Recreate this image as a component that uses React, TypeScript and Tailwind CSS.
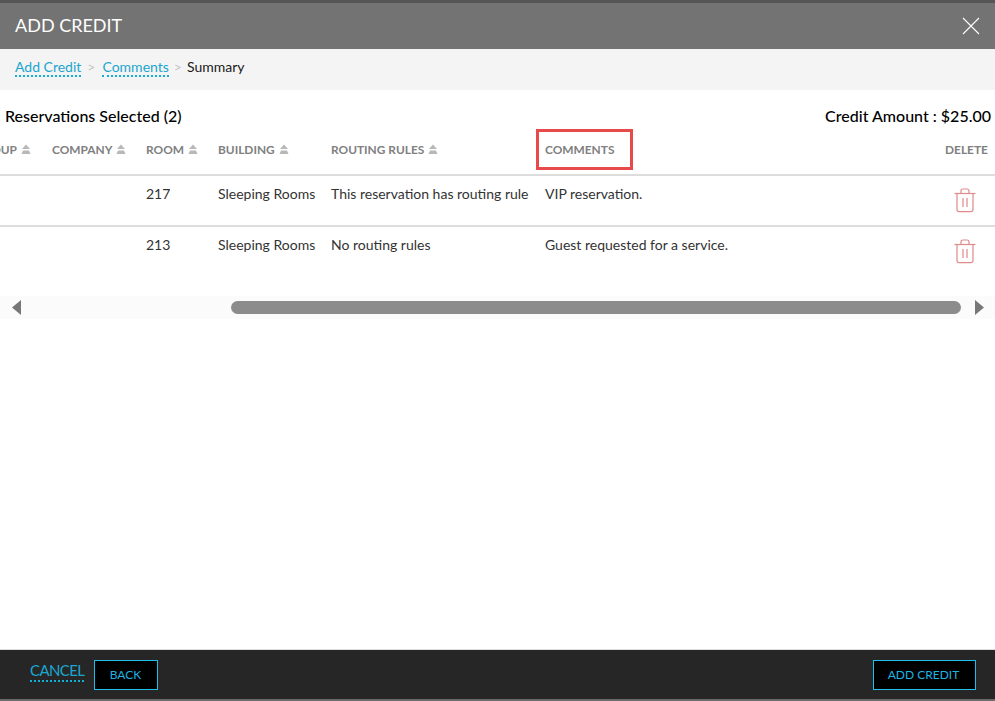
const rows = [
  { room: "217", building: "Sleeping Rooms", routing: "This reservation has routing rule", comment: "VIP reservation." },
  { room: "213", building: "Sleeping Rooms", routing: "No routing rules", comment: "Guest requested for a service." },
];

const SortIcon = () => (
  <svg width="10" height="11" viewBox="0 0 10 11" className="ml-[4px] shrink-0">
    <path d="M5 0.5 L9 5 H1 Z" fill="#b8b8b8" />
    <path d="M2 6.5 H8 L9.5 10 H0.5 Z" fill="#b8b8b8" />
  </svg>
);

const TrashIcon = () => (
  <svg width="22" height="25" viewBox="0 0 22 25" fill="none" stroke="#e08a8a" strokeWidth="1.2">
    <path d="M0.5 5.5 H21.5" />
    <path d="M7 5.5 V3 Q7 1 9 1 H13 Q15 1 15 3 V5.5" />
    <path d="M3 5.5 V21.5 Q3 23.7 5.2 23.7 H16.8 Q19 23.7 19 21.5 V5.5" />
    <path d="M9 10 V19 M13 10 V19" />
  </svg>
);

const Header = ({ label, width }: { label: string; width: string }) => (
  <div className={`${width} shrink-0 flex items-center`}>
    <span>{label}</span>
    <SortIcon />
  </div>
);

export default function App() {
  return (
    <div className="w-[995px] h-[701px] flex flex-col overflow-hidden bg-white font-['Lato',sans-serif]">
      <div className="h-[49px] shrink-0 bg-[#737373] border-t-[3px] border-[#555555] flex items-center justify-between pl-[15px] pr-[15px]">
        <h1 className="text-[18px] text-white mb-[1px]">ADD CREDIT</h1>
        <svg width="18" height="18" viewBox="0 0 18 18" stroke="white" strokeWidth="1.1">
          <path d="M1 1 L17 17 M17 1 L1 17" />
        </svg>
      </div>

      <div className="h-[41px] shrink-0 bg-[#f4f4f4] flex items-center pl-[15px] pb-[4px] text-[14px]">
        <a className="text-[#1aa6cf] border-b-2 border-dotted border-[#12b0d6] leading-[17px]">Add Credit</a>
        <span className="text-[#c4c4c4] ml-[6px] mr-[7px] text-[14px] leading-[17px] mb-[2px]">&gt;</span>
        <a className="text-[#1aa6cf] border-b-2 border-dotted border-[#12b0d6] leading-[17px]">Comments</a>
        <span className="text-[#c4c4c4] ml-[5px] mr-[5px] text-[14px] leading-[17px] mb-[2px]">&gt;</span>
        <span className="text-[#1a1a1a] leading-[17px] mb-[2px]">Summary</span>
      </div>

      <div className="flex-1 min-h-0 flex flex-col">
        <div className="flex justify-between pl-[5px] pr-[4px] pt-[16px] text-[16px] font-medium text-black leading-[20px]">
          <span>Reservations Selected (2)</span>
          <span>Credit Amount : $25.00</span>
        </div>

        <div className="h-[47px] mt-[3px] pb-[3px] flex items-center -ml-[25px] w-[1020px] text-[11.9px] font-bold text-[#808080] border-b-2 border-[#dddddd]">
          <Header label="GROUP" width="w-[77px]" />
          <Header label="COMPANY" width="w-[94px]" />
          <Header label="ROOM" width="w-[72px]" />
          <Header label="BUILDING" width="w-[113px]" />
          <Header label="ROUTING RULES" width="w-[214px]" />
          <div className="flex-1 relative">
            COMMENTS
            <div className="absolute -left-[9px] -top-[12px] w-[97px] h-[41px] border-[3px] border-[#e8494a]" />
          </div>
          <div className="w-[50px] shrink-0">DELETE</div>
        </div>

        {rows.map((row, i) => (
          <div
            key={row.room}
            className={`h-[51px] flex -ml-[25px] w-[1020px] text-[14px] text-[#333333] pt-[8px] leading-[20px] ${
              i === 0 ? "border-b-2 border-[#dddddd]" : ""
            }`}
          >
            <div className="w-[171px] shrink-0" />
            <div className="w-[72px] shrink-0">{row.room}</div>
            <div className="w-[113px] shrink-0">{row.building}</div>
            <div className="w-[214px] shrink-0">{row.routing}</div>
            <div className="flex-1">{row.comment}</div>
            <div className="w-[41px] shrink-0 pt-[4px]">
              <TrashIcon />
            </div>
          </div>
        ))}

        <div className="h-[23px] mt-[18px] shrink-0 bg-[#fbfbfb] flex items-center pl-[12px] pr-[11px]">
          <svg width="9" height="15" viewBox="0 0 9 15" className="shrink-0">
            <path d="M9 0 V15 L0 7.5 Z" fill="#777777" />
          </svg>
          <div className="ml-[210px] w-[730px] h-[13px] rounded-full bg-[#8c8c8c] shrink-0" />
          <svg width="9" height="15" viewBox="0 0 9 15" className="ml-[14px] shrink-0">
            <path d="M0 0 V15 L9 7.5 Z" fill="#777777" />
          </svg>
        </div>
      </div>

      <div className="h-[52px] shrink-0 bg-[#262626] border-t border-[#dddddd] border-b-2 border-b-[#6a6a6a] flex items-center pl-[30px] pr-[19px]">
        <a className="text-[15px] tracking-[-0.6px] text-[#1aa6cf] border-b-2 border-dotted border-[#12b0d6] leading-[20px] mb-[8px]">CANCEL</a>
        <button className="ml-[10px] w-[64px] h-[30px] pt-[1px] pr-[2px] bg-black border border-[#1cc0ea] text-[#1fb2e0] text-[12px]">BACK</button>
        <button className="ml-auto w-[103px] h-[30px] pt-[1px] pr-[2px] bg-black border border-[#1cc0ea] text-[#1fb2e0] text-[12px]">ADD CREDIT</button>
      </div>
    </div>
  );
}
